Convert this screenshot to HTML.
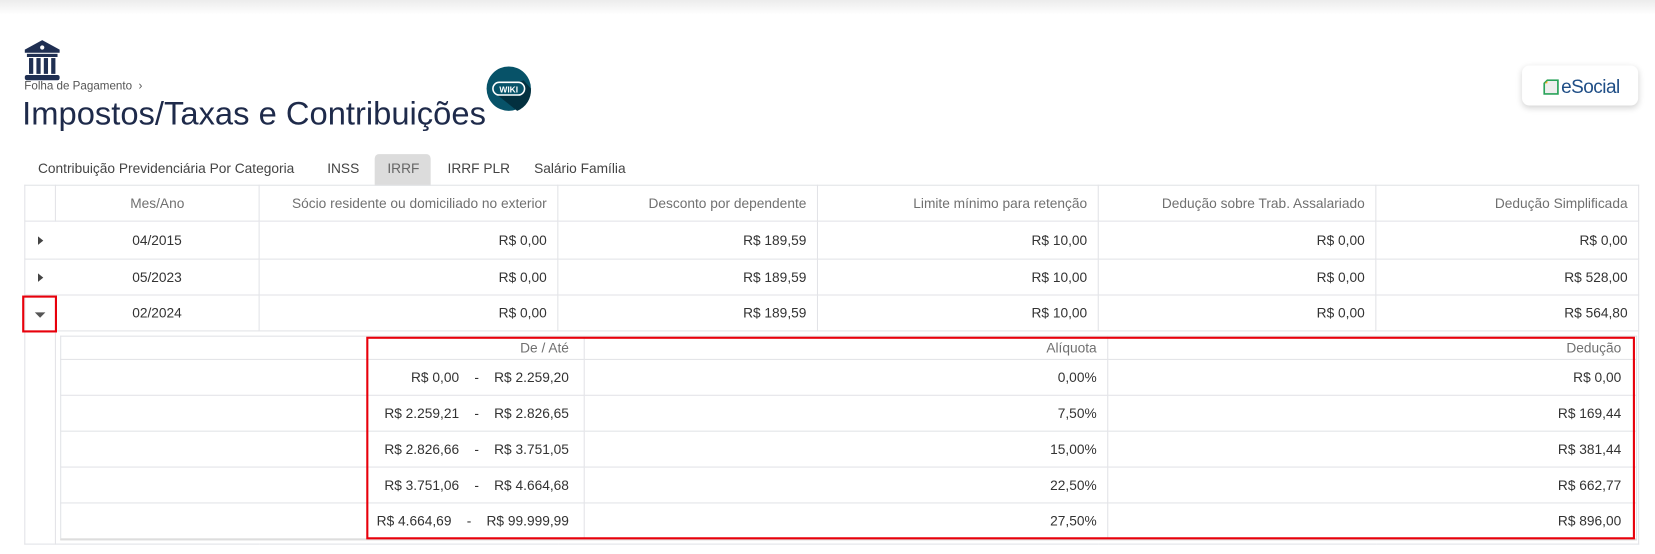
<!DOCTYPE html>
<html><head><meta charset="utf-8"><style>
*{box-sizing:border-box;margin:0;padding:0}
body{width:1655px;height:554px;background:#fff;font-family:"Liberation Sans",sans-serif;position:relative;overflow:hidden;color:#333}
#w{position:absolute;left:0;top:0;width:1568px;height:525px;transform:scale(1.0555);transform-origin:0 0}
.topbar{position:absolute;left:0;top:0;width:1568px;height:14px;background:linear-gradient(#ececec,#fff)}
.a{position:absolute}
table{border-collapse:collapse;table-layout:fixed;position:absolute}
td,th{border:1px solid #e2e3e7;font-size:13px;white-space:nowrap;overflow:hidden}
th{font-weight:normal;color:#707070;text-align:right;padding-right:10px}
td{text-align:right;padding-right:10px;color:#333}
.c{text-align:center;padding:0}
.tri{width:0;height:0;border-top:4px solid transparent;border-bottom:4px solid transparent;border-left:5px solid #444;display:inline-block}
.trid{width:0;height:0;border-left:5px solid transparent;border-right:5px solid transparent;border-top:5px solid #555;display:inline-block}
</style></head><body><div id="w">
<div class="topbar"></div>
<svg class="a" style="left:22px;top:37px" width="36" height="42" viewBox="0 0 35 42">
<path d="M17.5 1 L34 10 L34 13 L1 13 L1 10 Z" fill="#1f2f52"/>
<circle cx="17.5" cy="8" r="2" fill="#fff"/>
<rect x="3" y="14" width="29" height="3" fill="#1f2f52"/>
<rect x="5" y="18" width="4" height="15" fill="#1f2f52"/><rect x="12" y="18" width="4" height="15" fill="#1f2f52"/><rect x="19" y="18" width="4" height="15" fill="#1f2f52"/><rect x="26" y="18" width="4" height="15" fill="#1f2f52"/>
<rect x="1" y="34" width="33" height="5" rx="2" fill="#1f2f52"/>
</svg>
<div class="a" style="left:23px;top:76px;font-size:11px;color:#555">Folha de Pagamento &nbsp;›</div>
<div class="a" style="left:21px;top:90px;font-size:31px;color:#1e2a4a">Impostos/Taxas e Contribuições</div>
<svg class="a" style="left:460px;top:62px" width="44" height="44" viewBox="0 0 44 44">
<circle cx="22" cy="22" r="21" fill="#075268"/>
<path d="M10 27 L30 43 A21 21 0 0 0 43 22 L36 14 Z" fill="#03303f"/>
<rect x="7" y="16" width="30" height="12" rx="6" fill="#075268" stroke="#fff" stroke-width="1.5"/>
<text x="22" y="25.5" text-anchor="middle" font-size="8" font-weight="bold" fill="#fff" font-family="Liberation Sans">WIKI</text>
</svg>
<div class="a" style="left:1442px;top:62px;width:110px;height:38px;background:#fff;border-radius:7px;box-shadow:0 2px 6px rgba(0,0,0,.18)"></div>
<svg class="a" style="left:1462px;top:75px" width="16" height="16" viewBox="0 0 16 16"><path d="M1 4 L4 1 L14 1 L14 14 L1 14 Z" fill="#eee" stroke="#2aa35a" stroke-width="1.6"/><path d="M1.5 4 L4 1.5 L4 4 Z" fill="#f2b21b"/></svg>
<div class="a" style="left:1479px;top:72px;font-size:18px;color:#1f4e86;letter-spacing:-0.5px">eSocial</div>
<div class="a" style="left:355px;top:146px;width:53px;height:30px;background:#dcdcdc;border-radius:4px 4px 0 0"></div>
<div class="a" style="left:36px;top:152px;font-size:13px;color:#444">Contribuição Previdenciária Por Categoria</div>
<div class="a" style="left:310px;top:152px;font-size:13px;color:#444">INSS</div>
<div class="a" style="left:367px;top:152px;font-size:13px;color:#666">IRRF</div>
<div class="a" style="left:424px;top:152px;font-size:13px;color:#444">IRRF PLR</div>
<div class="a" style="left:506px;top:152px;font-size:13px;color:#444">Salário Família</div>
<table style="left:23px;top:175px;width:1529px">
<colgroup><col style="width:29px"><col style="width:193px"><col style="width:283px"><col style="width:246px"><col style="width:266px"><col style="width:263px"><col style="width:249px"></colgroup>
<tr style="height:34px"><th></th><th class="c">Mes/Ano</th><th>Sócio residente ou domiciliado no exterior</th><th>Desconto por dependente</th><th>Limite mínimo para retenção</th><th>Dedução sobre Trab. Assalariado</th><th>Dedução Simplificada</th></tr>
<tr style="height:36px"><td class="c" style="border-right:none"><span class="tri"></span></td><td class="c" style="border-left:none">04/2015</td><td>R$ 0,00</td><td>R$ 189,59</td><td>R$ 10,00</td><td>R$ 0,00</td><td>R$ 0,00</td></tr>
<tr style="height:34px"><td class="c" style="border-right:none"><span class="tri"></span></td><td class="c" style="border-left:none">05/2023</td><td>R$ 0,00</td><td>R$ 189,59</td><td>R$ 10,00</td><td>R$ 0,00</td><td>R$ 528,00</td></tr>
<tr style="height:34px"><td class="c" style="border-right:none"><span class="trid"></span></td><td class="c" style="border-left:none">02/2024</td><td>R$ 0,00</td><td>R$ 189,59</td><td>R$ 10,00</td><td>R$ 0,00</td><td>R$ 564,80</td></tr>
<tr style="height:202px"><td style="border-right:1px solid #e2e3e7"></td><td colspan="6"></td></tr>
</table>
<table style="left:57px;top:318px;width:1493px;border-bottom:2px solid #ddd">
<colgroup><col style="width:496px"><col style="width:496px"><col style="width:501px"></colgroup>
<tr style="height:22px"><th style="padding-right:14px">De / Até</th><th>Alíquota</th><th style="padding-right:14px">Dedução</th></tr>
<tr style="height:34px"><td style="padding-right:14px">R$ 0,00 &nbsp;&nbsp; - &nbsp;&nbsp; R$ 2.259,20</td><td>0,00%</td><td style="padding-right:14px">R$ 0,00</td></tr>
<tr style="height:34px"><td style="padding-right:14px">R$ 2.259,21 &nbsp;&nbsp; - &nbsp;&nbsp; R$ 2.826,65</td><td>7,50%</td><td style="padding-right:14px">R$ 169,44</td></tr>
<tr style="height:34px"><td style="padding-right:14px">R$ 2.826,66 &nbsp;&nbsp; - &nbsp;&nbsp; R$ 3.751,05</td><td>15,00%</td><td style="padding-right:14px">R$ 381,44</td></tr>
<tr style="height:34px"><td style="padding-right:14px">R$ 3.751,06 &nbsp;&nbsp; - &nbsp;&nbsp; R$ 4.664,68</td><td>22,50%</td><td style="padding-right:14px">R$ 662,77</td></tr>
<tr style="height:34px"><td style="padding-right:14px">R$ 4.664,69 &nbsp;&nbsp; - &nbsp;&nbsp; R$ 99.999,99</td><td>27,50%</td><td style="padding-right:14px">R$ 896,00</td></tr>
</table>
<div class="a" style="left:347px;top:319px;width:1202px;height:192px;border:2px solid #e8000b"></div>
<div class="a" style="left:21px;top:280px;width:33px;height:35px;border:2px solid #e8000b"></div>
</div></body></html>
